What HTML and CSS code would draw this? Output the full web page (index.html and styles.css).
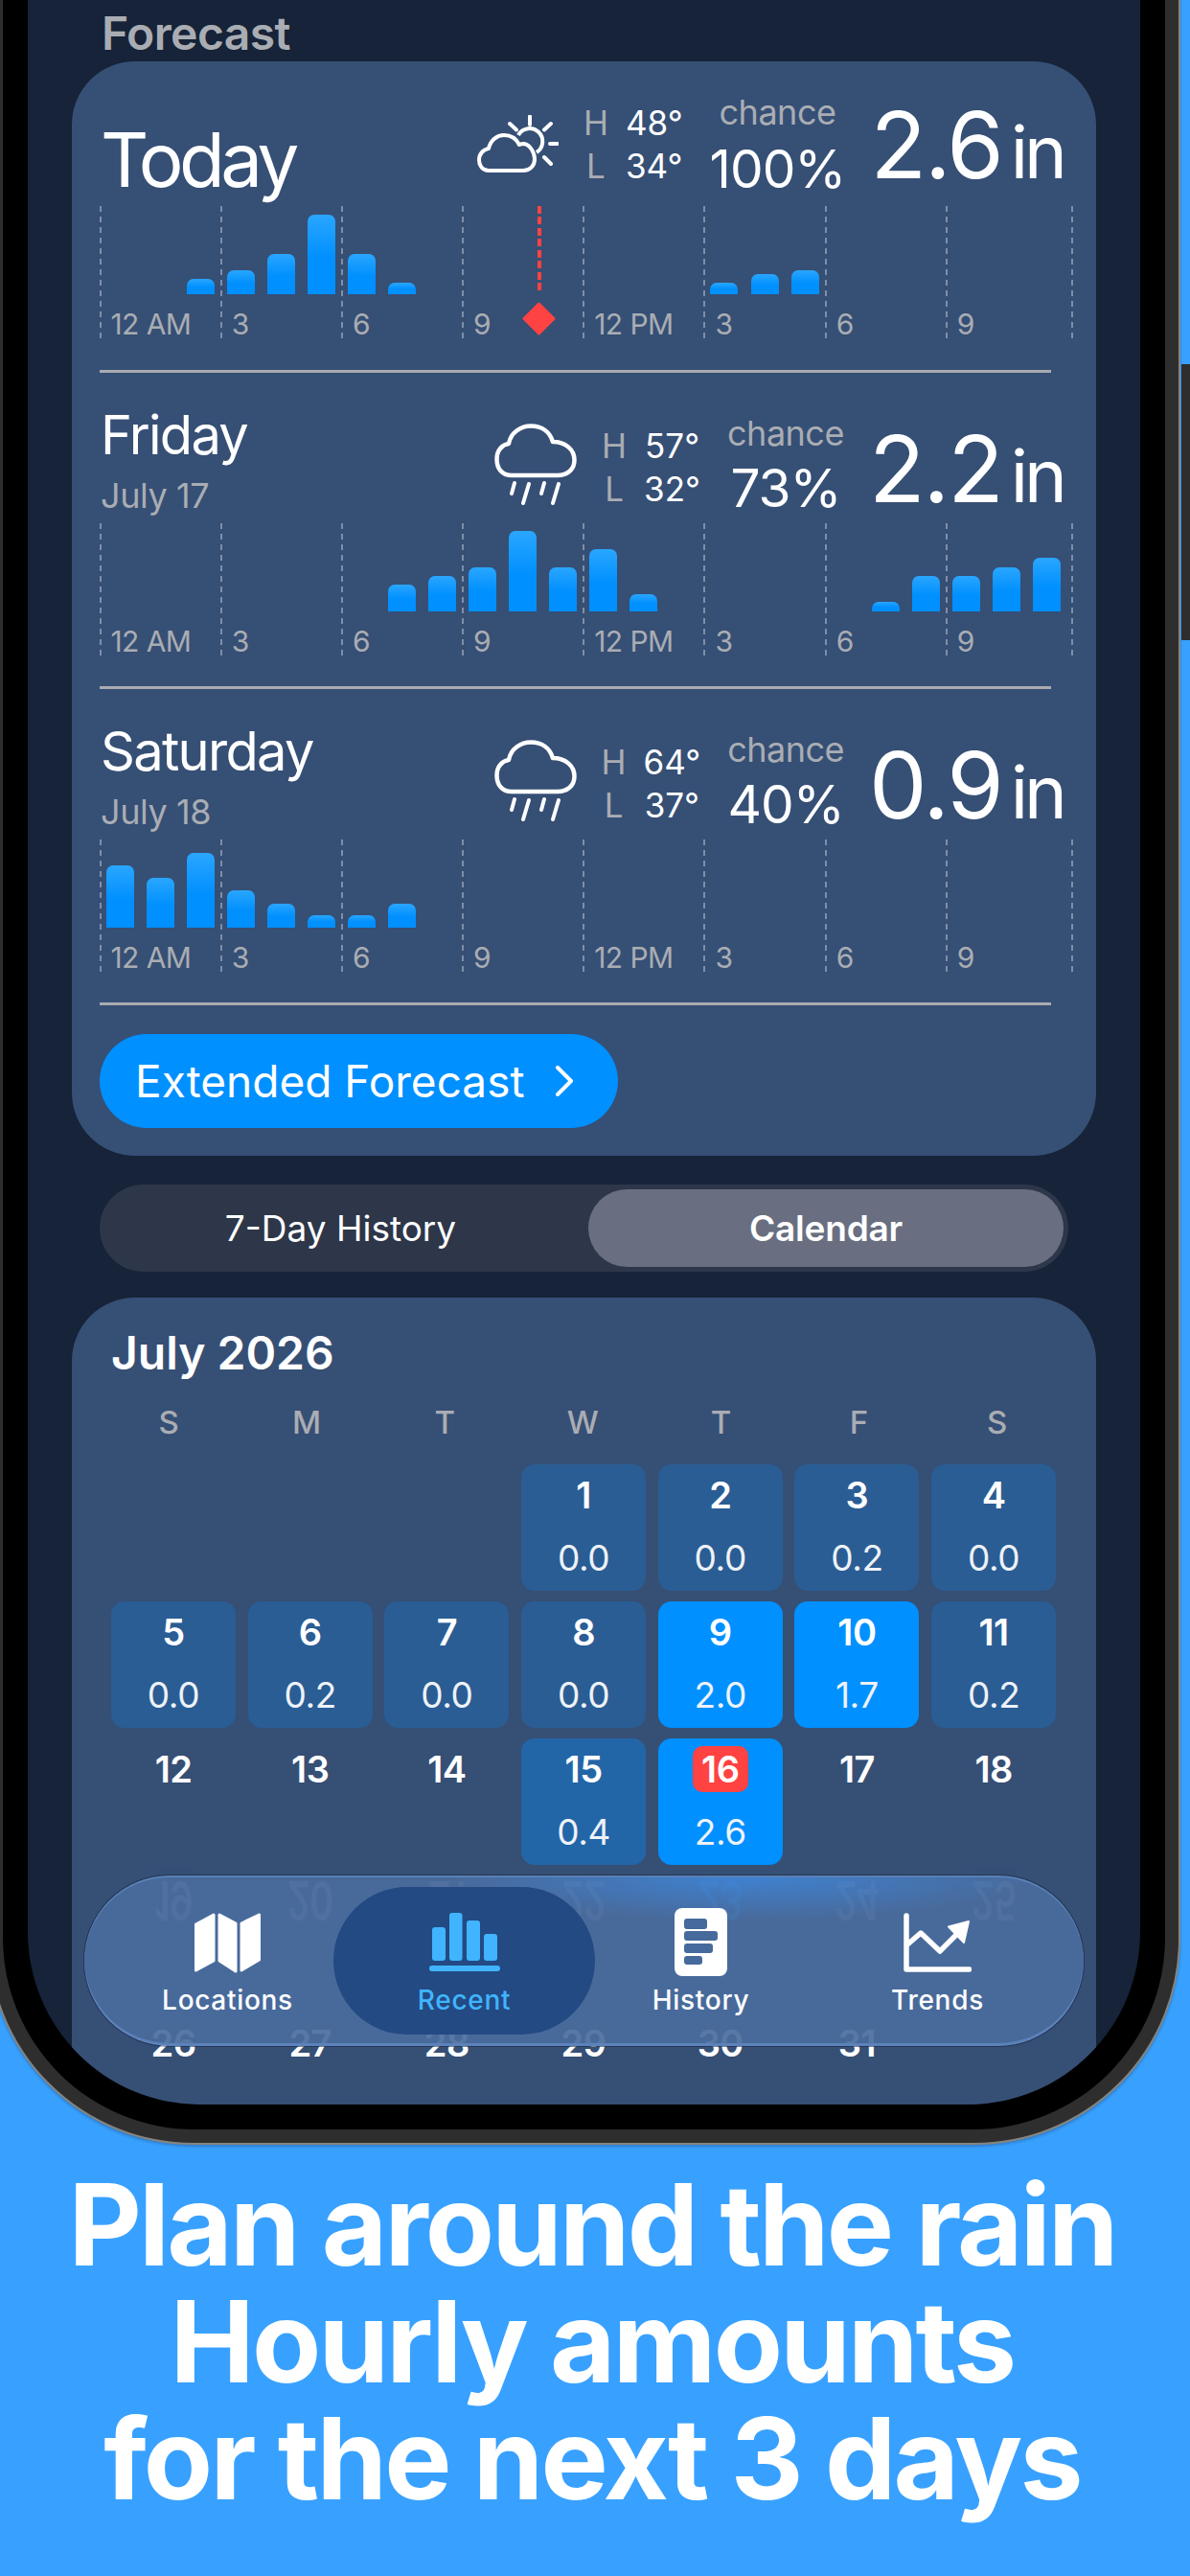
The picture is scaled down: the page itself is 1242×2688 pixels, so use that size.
FILE: index.html
```html
<!DOCTYPE html>
<html lang="en">
<head>
<meta charset="utf-8">
<title>Rain forecast</title>
<link rel="stylesheet" href="styles.css">
</head>
<body>
<svg class="defs" width="0" height="0" aria-hidden="true">
  <symbol id="rain" viewBox="0 0 86 85">
    <path d="M18 54C8 54 2.500 47 2.500 37C2.500 28 8 22 15 21C17 9 28 2.500 38 2.500C50 2.500 58 9 61 19C74 19 83.500 27 83.500 38C83.500 48 76 54 66 54Z" fill="none" stroke="#fff" stroke-width="4.500" stroke-linejoin="round"/>
    <path d="M21 62L18 73M36 63L30 83M52 62L49 73M67 63L61 83" fill="none" stroke="#fff" stroke-width="4" stroke-linecap="round"/>
  </symbol>
</svg>
<main class="stage">
  <div class="side-button"></div>
  <div class="phone">
    <div class="bezel">
      <div class="screen">
        <h2 class="section-title">Forecast</h2>
        <section class="card forecast">
          <article class="day day-today">
            <div class="head">
              <div class="title"><h3 class="big">Today</h3></div>
              <div class="stats">
                <svg class="icon-sun" viewBox="0 0 85 60"><path d="M12 58C5 58 2 52 2 47C2 41 6 36 12 35C14 26 21 21 28 21C35 21 41 25 44 31C46 30 48 30 49 30C55 31 60 39 60 46C60 53 55 58 48 58Z" fill="none" stroke="#fff" stroke-width="4" stroke-linejoin="round"/><path d="M43 21A13.500 13.500 0 1 1 62 39" fill="none" stroke="#fff" stroke-width="4"/><path d="M55 1.500V10M34 9L41 15.500M77 9L70 15.500M76 30H84M70 44L77 51" fill="none" stroke="#fff" stroke-width="4" stroke-linecap="round"/></svg>
                <div class="temps"><span class="k">H</span><span>48°</span><span class="k">L</span><span>34°</span></div>
                <div class="chance"><span>chance</span><b>100%</b></div>
                <div class="amount"><b>2.6</b><span>in</span></div>
              </div>
            </div>
            <div class="chart">
              <div class="hours"><div>12 AM</div><div>3</div><div>6</div><div>9</div><div>12 PM</div><div>3</div><div>6</div><div>9</div></div>
              <div class="bars">
                <i style="grid-column-start:3;height:16px"></i><i style="height:25px"></i><i style="height:42px"></i><i style="height:83px"></i><i style="height:42px"></i><i style="height:12px"></i>
                <i style="grid-column-start:16;height:12px"></i><i style="height:21px"></i><i style="height:25px"></i>
              </div>
              <div class="now"><svg class="now-mark" viewBox="0 0 35 35"><path d="M17.500 2L33 17.500L17.500 33L2 17.500Z" fill="#ff4242" stroke="#ff4242" stroke-width="3" stroke-linejoin="round"/></svg></div>
            </div>
          </article>
          <article class="day">
            <div class="head">
              <div class="title"><h3>Friday</h3><p>July 17</p></div>
              <div class="stats">
                <svg class="icon-rain"><use href="#rain"/></svg>
                <div class="temps"><span class="k">H</span><span>57°</span><span class="k">L</span><span>32°</span></div>
                <div class="chance"><span>chance</span><b>73%</b></div>
                <div class="amount"><b>2.2</b><span>in</span></div>
              </div>
            </div>
            <div class="chart">
              <div class="hours"><div>12 AM</div><div>3</div><div>6</div><div>9</div><div>12 PM</div><div>3</div><div>6</div><div>9</div></div>
              <div class="bars">
                <i style="grid-column-start:8;height:28px"></i><i style="height:37px"></i><i style="height:46px"></i><i style="height:84px"></i><i style="height:46px"></i><i style="height:65px"></i><i style="height:18px"></i>
                <i style="grid-column-start:20;height:10px"></i><i style="height:37px"></i><i style="height:37px"></i><i style="height:46px"></i><i style="height:56px"></i>
              </div>
            </div>
          </article>
          <article class="day">
            <div class="head">
              <div class="title"><h3>Saturday</h3><p>July 18</p></div>
              <div class="stats">
                <svg class="icon-rain"><use href="#rain"/></svg>
                <div class="temps"><span class="k">H</span><span>64°</span><span class="k">L</span><span>37°</span></div>
                <div class="chance"><span>chance</span><b>40%</b></div>
                <div class="amount"><b>0.9</b><span>in</span></div>
              </div>
            </div>
            <div class="chart">
              <div class="hours"><div>12 AM</div><div>3</div><div>6</div><div>9</div><div>12 PM</div><div>3</div><div>6</div><div>9</div></div>
              <div class="bars">
                <i style="height:65px"></i><i style="height:52px"></i><i style="height:78px"></i><i style="height:39px"></i><i style="height:25px"></i><i style="height:13px"></i><i style="height:13px"></i><i style="height:25px"></i>
              </div>
            </div>
          </article>
          <a class="extended">Extended Forecast<svg class="chevron" viewBox="0 0 20 32"><path d="M3 2L17 16L3 30" fill="none" stroke="#fff" stroke-width="4" stroke-linecap="round" stroke-linejoin="round"/></svg></a>
        </section>
        <div class="segment"><div class="seg seg-off">7-Day History</div><div class="seg seg-on">Calendar</div></div>
        <section class="card calendar">
          <h3 class="month">July 2026</h3>
          <div class="weekdays"><span>S</span><span>M</span><span>T</span><span>W</span><span>T</span><span>F</span><span>S</span></div>
          <div class="grid">
            <div class="cell"></div><div class="cell"></div><div class="cell"></div>
            <div class="cell low"><b>1</b><span>0.0</span></div>
            <div class="cell low"><b>2</b><span>0.0</span></div>
            <div class="cell low"><b>3</b><span>0.2</span></div>
            <div class="cell low"><b>4</b><span>0.0</span></div>
            <div class="cell low"><b>5</b><span>0.0</span></div>
            <div class="cell low"><b>6</b><span>0.2</span></div>
            <div class="cell low"><b>7</b><span>0.0</span></div>
            <div class="cell low"><b>8</b><span>0.0</span></div>
            <div class="cell high"><b>9</b><span>2.0</span></div>
            <div class="cell high"><b>10</b><span>1.7</span></div>
            <div class="cell low"><b>11</b><span>0.2</span></div>
            <div class="cell"><b>12</b></div>
            <div class="cell"><b>13</b></div>
            <div class="cell"><b>14</b></div>
            <div class="cell mid"><b>15</b><span>0.4</span></div>
            <div class="cell high today"><b>16</b><span>2.6</span></div>
            <div class="cell"><b>17</b></div>
            <div class="cell"><b>18</b></div>
            <div class="cell ghost"><b>19</b></div>
            <div class="cell ghost"><b>20</b></div>
            <div class="cell ghost"><b>21</b></div>
            <div class="cell ghost"><b>22</b></div>
            <div class="cell ghost ghost-blue"><b>23</b></div>
            <div class="cell ghost"><b>24</b></div>
            <div class="cell ghost"><b>25</b></div>
            <div class="cell"><b>26</b></div>
            <div class="cell"><b>27</b></div>
            <div class="cell"><b>28</b></div>
            <div class="cell"><b>29</b></div>
            <div class="cell"><b>30</b></div>
            <div class="cell"><b>31</b></div>
            <div class="cell"></div>
          </div>
        </section>
        <nav class="tabbar">
          <div class="tab">
            <div class="tab-icon"><svg width="69" height="64" viewBox="0 0 69 64"><path d="M20 3L1.500 13V61L20 51ZM26 3L43 12V62L26 51ZM49 12L67.500 3V50L49 61Z" fill="#fff" stroke="#fff" stroke-width="3" stroke-linejoin="round"/></svg></div>
            <span>Locations</span>
          </div>
          <div class="tab tab-on">
            <div class="tab-icon"><svg width="74" height="61" viewBox="0 0 74 61" fill="#40b4ff"><rect x="3" y="15" width="14" height="35" rx="3"/><rect x="21" y="0" width="13.500" height="50" rx="3"/><rect x="39" y="8" width="14" height="42" rx="3"/><rect x="57" y="22" width="14" height="28" rx="3"/><rect x="0" y="55" width="74" height="6" rx="3"/></svg></div>
            <span>Recent</span>
          </div>
          <div class="tab">
            <div class="tab-icon"><svg width="55" height="71" viewBox="0 0 55 71"><rect width="55" height="71" rx="8" fill="#fff"/><g fill="#466a9c"><rect x="10" y="11" width="24" height="11" rx="3"/><rect x="10" y="24" width="35" height="10" rx="3"/><rect x="10" y="37" width="30" height="10" rx="3"/><rect x="10" y="50" width="19" height="9" rx="3"/></g></svg></div>
            <span>History</span>
          </div>
          <div class="tab">
            <div class="tab-icon"><svg width="71" height="62" viewBox="0 0 71 62"><path d="M3 3V59H68.500" fill="none" stroke="#fff" stroke-width="5.500" stroke-linecap="round" stroke-linejoin="round"/><path d="M3 34L18 21L38 40L56 22" fill="none" stroke="#fff" stroke-width="5.500" stroke-linejoin="round"/><path d="M68 9L47 14.500L63 31Z" fill="#fff" stroke="#fff" stroke-width="2" stroke-linejoin="round"/></svg></div>
            <span>Trends</span>
          </div>
        </nav>
      </div>
    </div>
  </div>
  <h1 class="headline">Plan around the rain<br>Hourly amounts<br>for the next 3 days</h1>
</main>
</body>
</html>
```
FILE: styles.css
```css
* { box-sizing: border-box; }
html, body { margin: 0; padding: 0; }
body { width: 1242px; height: 2688px; overflow: hidden; background: #38a1ff; font-family: Inter, "Liberation Sans", sans-serif; color: #fff; }
h1, h2, h3, p { margin: 0; font-weight: 400; }
.defs { position: absolute; }

.stage { position: relative; display: flex; flex-direction: column; width: 1242px; height: 2688px; overflow: hidden; background: #38a1ff; }
.side-button { position: absolute; left: 1233px; top: 380px; width: 9px; height: 288px; background: #2e2e2e; }

.phone { flex: none; width: 1245px; height: 2478px; margin: -240px 0 0 -13px; padding: 14px; background: #2e2e2e; border: 2px solid #85847f; border-radius: 215px; box-shadow: 0 2px 3px rgba(30, 60, 100, .35); }
.bezel { height: 100%; padding: 26px; background: #000; border-radius: 200px; }
.screen { position: relative; height: 100%; padding: 198px 46px 0; background: #162338; border-radius: 180px; overflow: hidden; }

.section-title { height: 64px; padding: 8px 0 0 31px; font-size: 48px; line-height: 54px; font-weight: 600; letter-spacing: -.6px; color: #a9adb3; }

.card { background: #364f75; border-radius: 66px; }
.forecast { height: 1142px; padding: 0 29px; }

.day { height: 330px; background: linear-gradient(#a9abb0, #a9abb0) left bottom / 993px 3px no-repeat; }
.day-today { height: 325px; }
.head { display: flex; justify-content: space-between; align-items: flex-end; width: 1006px; height: 157px; padding-bottom: 9px; }
.day-today .head { height: 151px; padding-bottom: 11px; }
.title { padding-left: 1px; }
.title h3 { font-size: 56px; line-height: 66px; letter-spacing: -1.7px; margin-bottom: 8px; }
.title p { font-size: 36px; line-height: 44px; letter-spacing: -.4px; color: #a9adb3; margin-bottom: -2px; }
.title h3.big { font-size: 78px; line-height: 88px; letter-spacing: -4.5px; margin-bottom: -7px; }

.stats { display: flex; align-items: flex-end; gap: 26px; }
.icon-sun { width: 85px; height: 60px; margin-bottom: 24px; }
.icon-rain { width: 86px; height: 85px; margin-bottom: 10px; }
.temps { display: grid; grid-template-columns: auto auto; column-gap: 18px; justify-items: center; margin-bottom: 4px; font-size: 35px; line-height: 45px; letter-spacing: 0; }
.day-today .temps { margin-bottom: 8px; }
.temps .k { color: #a9adb3; }
.chance { display: flex; flex-direction: column; align-items: center; margin: 0 0 -3px 2px; }
.day-today .chance { margin-bottom: -3px; }
.chance span { font-size: 36px; line-height: 44px; color: #a9adb3; letter-spacing: -.5px; margin-bottom: 4px; }
.day-today .chance span { margin-bottom: 6px; }
.chance b { font-size: 55px; line-height: 62px; font-weight: 400; letter-spacing: -1px; }
.amount { display: flex; align-items: baseline; gap: 9px; margin: 0 0 -9px 0; }
.day-today .amount { margin-bottom: -4px; }
.amount b { font-size: 96px; line-height: 100px; font-weight: 400; letter-spacing: -2px; }
.amount span { font-size: 76px; line-height: 100px; letter-spacing: -4px; }

.chart { display: grid; position: relative; width: 1010px; height: 143px; margin-left: -.5px; }
.chart > * { grid-area: 1 / 1; }
.hours { display: grid; grid-template-columns: repeat(8, 126.2px); background: repeating-linear-gradient(to bottom, rgba(200, 205, 215, .5) 0 6px, transparent 6px 11px) right top / 2px 100% no-repeat; }
.hours div { display: flex; align-items: flex-end; padding: 0 0 3px 12px; font-size: 30px; line-height: 34px; letter-spacing: -.6px; color: #a9adb3; background: repeating-linear-gradient(to bottom, rgba(200, 205, 215, .5) 0 6px, transparent 6px 11px) left top / 2px 100% no-repeat; }
.bars { display: grid; grid-template-columns: repeat(24, 42.07px); align-items: end; padding: 0 0 51px 7px; }
.bars i { display: block; width: 29px; border-radius: 7px 7px 0 0; background: linear-gradient(to bottom, #2aa6ff, #0090ff 55%); }
.now { position: absolute; left: 457px; top: 0; width: 4px; height: 92px; background: repeating-linear-gradient(to bottom, #ff4242 0 8px, transparent 8px 11.500px); }
.now-mark { position: absolute; left: -15.500px; top: 100px; width: 35px; height: 35px; }

.extended { display: inline-flex; align-items: center; gap: 31px; margin-top: 30px; height: 98px; width: 541px; padding-left: 37px; background: #0090ff; border-radius: 49px; font-size: 46px; }
.chevron { width: 20px; height: 32px; }

.segment { display: grid; grid-template-columns: 505px 1fr; margin: 30px 29px 27px; height: 91px; padding: 5px; background: #2e3649; border-radius: 46px; }
.seg { display: flex; align-items: center; justify-content: center; font-size: 37px; }
.seg-off { padding-right: 12px; }
.seg-on { background: #696f80; border-radius: 41px; font-weight: 600; letter-spacing: -.2px; }

.calendar { position: relative; height: 1000px; padding: 0 29px; }
.month { padding: 31px 0 0 12px; font-size: 48px; line-height: 54px; font-weight: 600; letter-spacing: 0; }
.weekdays { display: grid; grid-template-columns: repeat(7, 144.1px); margin-top: 25px; font-size: 33px; line-height: 40px; font-weight: 500; text-align: center; color: #a9adb3; }
.grid { display: grid; grid-template-columns: repeat(7, 130px); gap: 11px 12.700px; margin: 24px 0 0 12px; grid-auto-rows: 132px; }
.cell { display: flex; flex-direction: column; align-items: center; padding-top: 12px; border-radius: 14px; }
.cell b { font-size: 38px; line-height: 40px; font-weight: 600; letter-spacing: -.5px; }
.cell span { margin-top: 26px; font-size: 37px; line-height: 40px; letter-spacing: -.4px; color: #eef2f7; }
.low { background: #2a5d94; }
.mid { background: #2366a8; }
.high { background: #0090ff; }
.today b { display: flex; align-items: center; justify-content: center; width: 58px; height: 48px; margin: -4px 0; background: #ff4242; border-radius: 10px; }
.ghost b { opacity: .45; transform: translateY(-5px) scaleY(-1.5); }
.ghost-blue b { color: #2f9bff; opacity: 1; }

.tabbar { position: absolute; left: 59px; right: 59px; bottom: 61px; height: 178px; isolation: isolate; display: grid; grid-template-columns: repeat(4, 247px); padding: 0 26px; border-radius: 89px; background: radial-gradient(ellipse 300px 46px at 66% 0, rgba(56, 150, 255, .55), transparent), rgba(74, 108, 158, .92); box-shadow: inset 0 2px 0 #5a80b6, inset 0 -3px 0 #5b82ba, 0 0 0 1px rgba(20, 32, 54, .55); }
.tab { position: relative; display: flex; flex-direction: column; align-items: center; padding-top: 34px; font-size: 28px; line-height: 30px; font-weight: 500; letter-spacing: .7px; }
.tab-icon { display: flex; align-items: center; justify-content: center; height: 71px; margin-bottom: 10px; }
.tab-on { color: #40b4ff; }
.tab-on::before { content: ""; position: absolute; z-index: -1; left: -13px; right: -13px; top: 12px; bottom: 12px; border-radius: 77px; background: #234a82; }

.headline { flex: none; width: 1242px; margin-top: 22px; padding-right: 6px; font-size: 118px; line-height: 122px; font-weight: 700; text-align: center; letter-spacing: -2.8px; }
```
